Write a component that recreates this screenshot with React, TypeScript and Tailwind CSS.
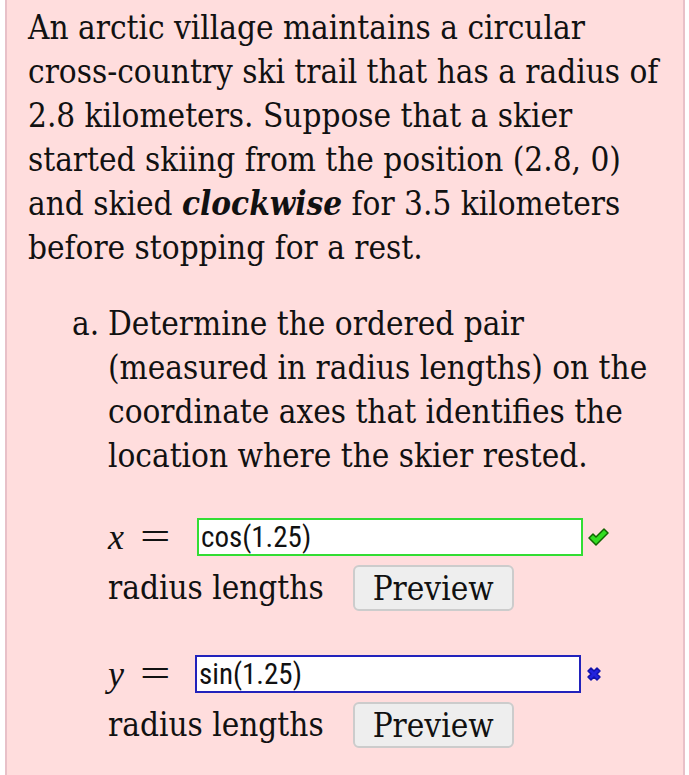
import React from 'react';

const serif = '"DejaVu Serif Condensed", "DejaVu Serif", serif';
const mathFont = '"Liberation Serif", "DejaVu Serif", serif';

function Check() {
  return (
    <svg width="22" height="20" viewBox="0 0 22 20" className="ml-[4px]">
      <path d="M2 11 L6 7 L9 10 L17 2 L21 6 L9 18 Z" fill="#33dd22" stroke="#116600" strokeWidth="1.5" strokeLinejoin="round" />
    </svg>
  );
}

function Cross() {
  return (
    <svg width="18" height="18" viewBox="0 0 18 18" className="ml-[4px]">
      <path d="M3 6 L6 3 L9 6 L12 3 L15 6 L12 9 L15 12 L12 15 L9 12 L6 15 L3 12 L6 9 Z" fill="#2222dd" stroke="#1111aa" strokeWidth="1.5" strokeLinejoin="round" />
    </svg>
  );
}

function AnswerRow({ name, value, ok }: { name: string; value: string; ok: boolean }) {
  return (
    <div className="flex flex-col">
      <div className="flex items-center h-[38px]">
        <span className={`flex items-center leading-none ${ok ? 'w-[89px]' : 'w-[87px]'}`} style={{ fontFamily: mathFont }}>
          <i className="text-[36px] w-[32px]">{name}</i>
          <span className="text-[40px] inline-block scale-x-[1.35] origin-left">=</span>
        </span>
        <div
          className={`h-[38px] w-[386px] bg-white border-2 px-[2px] flex items-center text-[29px] ${ok ? 'border-[#33dd33]' : 'border-[#2222bb]'}`}
          style={{ fontFamily: '"Liberation Sans Narrow", "Roboto Condensed", Roboto, sans-serif' }}
        >
          {value}
        </div>
        {ok ? <Check /> : <Cross />}
      </div>
      <div className="flex items-center mt-[9px]">
        <span>radius lengths</span>
        <button className="ml-[29px] h-[46px] w-[161px] bg-[#eeeeee] border-2 border-[#cccccc] rounded-[6px] leading-none">
          Preview
        </button>
      </div>
    </div>
  );
}

export default function App() {
  return (
    <div className="bg-white min-h-[775px] pl-[5px] pr-[4px]">
      <div
        className="bg-[#ffdddd] border-x-2 border-[#e8c0c8] min-h-[775px] pl-[21px] pr-[4px] pt-[6px] text-[33px] leading-[44px] text-[#111111] whitespace-nowrap"
        style={{ fontFamily: serif }}
      >
        <p>
          An arctic village maintains a circular
          <br />
          cross-country ski trail that has a radius of
          <br />
          2.8 kilometers. Suppose that a skier
          <br />
          started skiing from the position (2.8, 0)
          <br />
          and skied <b><i>clockwise</i></b> for 3.5 kilometers
          <br />
          before stopping for a rest.
        </p>
        <div className="flex mt-[32px]">
          <span className="w-[36px] ml-[44px] shrink-0">a.</span>
          <div className="flex flex-col">
            <p>
              Determine the ordered pair
              <br />
              (measured in radius lengths) on the
              <br />
              coordinate axes that identifies the
              <br />
              location where the skier rested.
            </p>
            <div className="mt-[40px] flex flex-col gap-[44px]">
              <AnswerRow name="x" value="cos(1.25)" ok={true} />
              <AnswerRow name="y" value="sin(1.25)" ok={false} />
            </div>
          </div>
        </div>
      </div>
    </div>
  );
}
